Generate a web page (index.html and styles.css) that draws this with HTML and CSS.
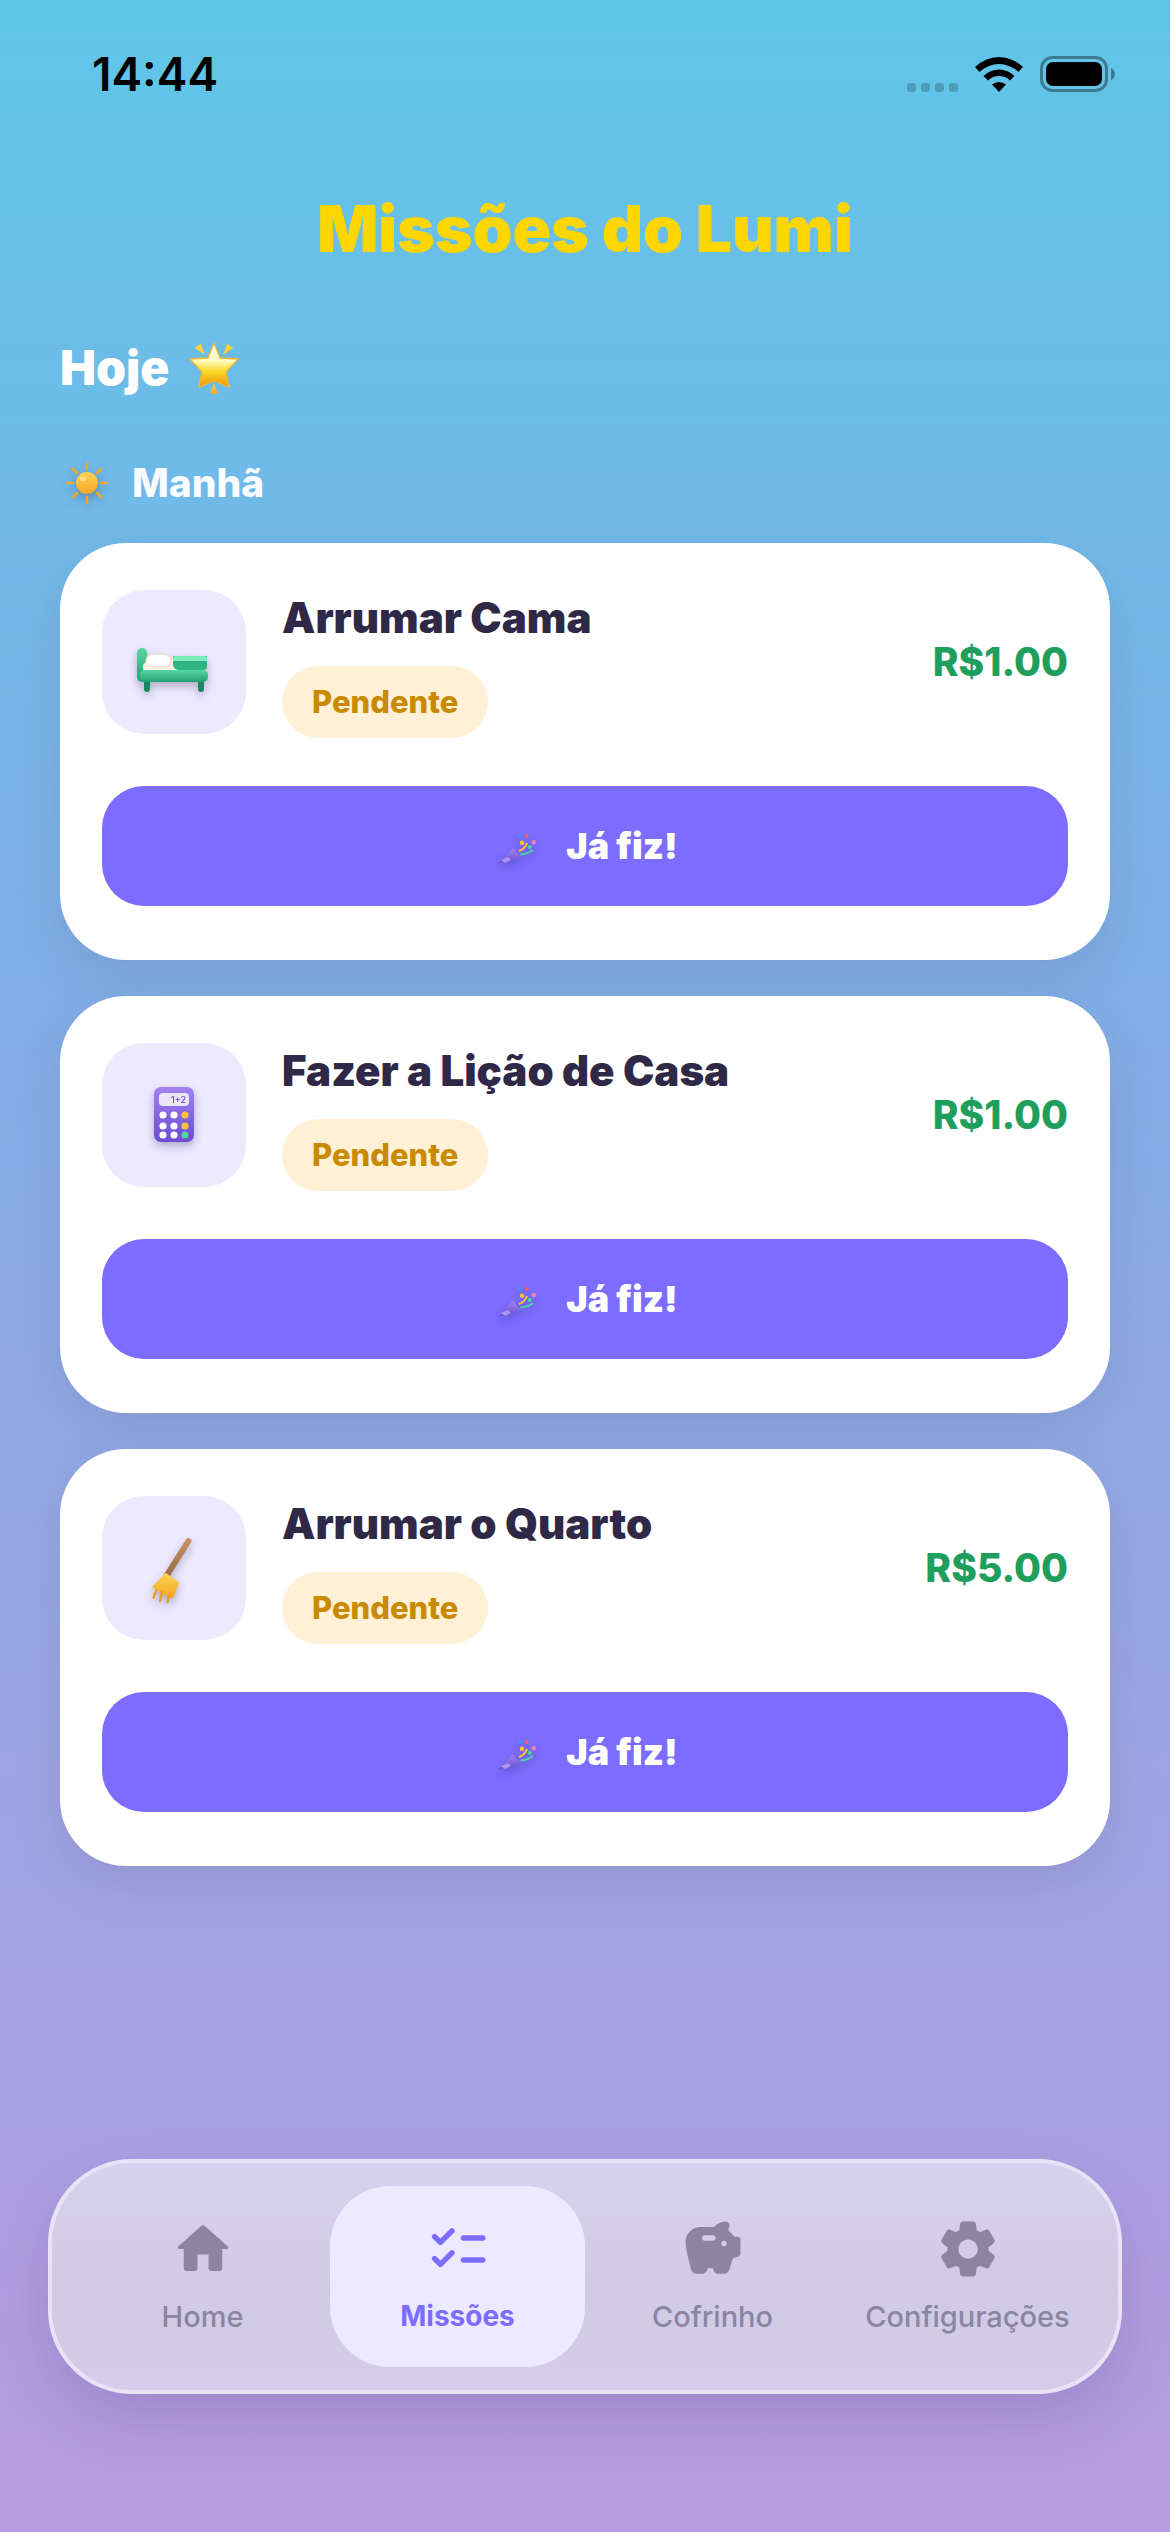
FILE: index.html
```html
<!DOCTYPE html>
<html lang="pt-BR">
<head>
<meta charset="utf-8">
<meta name="viewport" content="width=device-width, initial-scale=1">
<title>Missões do Lumi</title>
<link rel="stylesheet" href="styles.css">
</head>
<body>
<svg class="defs" aria-hidden="true">
  <defs>
    <linearGradient id="gold" x1="0" y1="0" x2="0" y2="1"><stop offset="0" stop-color="#fdd552"/><stop offset="1" stop-color="#f5a623"/></linearGradient>
    <linearGradient id="star" x1="0" y1="0" x2="0" y2="1"><stop offset="0" stop-color="#fffdf0"/><stop offset=".4" stop-color="#fffbc4"/><stop offset=".65" stop-color="#fbd826"/><stop offset="1" stop-color="#ee9410"/></linearGradient>
    <linearGradient id="green" x1="0" y1="0" x2="0" y2="1"><stop offset="0" stop-color="#56d8a4"/><stop offset="1" stop-color="#23a072"/></linearGradient>
    <linearGradient id="purple" x1="0" y1="0" x2="0" y2="1"><stop offset="0" stop-color="#a283f0"/><stop offset="1" stop-color="#6a4bd4"/></linearGradient>
    <linearGradient id="wood" gradientUnits="userSpaceOnUse" x1="0" y1="42" x2="0" y2="80"><stop offset="0" stop-color="#c99464"/><stop offset="1" stop-color="#9c6a42"/></linearGradient>
    <symbol id="popper" viewBox="0 0 48 48">
      <path d="M21 26 29 35 6 42Z" fill="url(#purple)"/>
      <path d="M9 38 16 35 19 38 13 41Z" fill="#c9b6fa" opacity=".65"/>
      <path d="M27 29Q33 27 35 21" fill="none" stroke="#fbbf3a" stroke-width="2"/>
      <path d="M28.500 32.500Q36 32 41 28" fill="none" stroke="#4cd6a0" stroke-width="2"/>
      <circle cx="28" cy="14" r="2" fill="#3b97f5"/><circle cx="34.700" cy="14" r="2" fill="#f25c66"/>
      <circle cx="41.700" cy="20.300" r="2.200" fill="#f283b8"/><circle cx="30" cy="20.700" r="2.200" fill="#fbbf3a"/>
      <circle cx="37.700" cy="25" r="2" fill="#4cd6a0"/>
    </symbol>
  </defs>
</svg>

<header class="status">
  <time class="clock">14:44</time>
  <div class="indicators">
    <svg width="51" height="9" viewBox="0 0 51 9" fill="#4d9cba" aria-hidden="true"><rect width="9" height="9" rx="3"/><rect x="14" width="9" height="9" rx="3"/><rect x="28" width="9" height="9" rx="3"/><rect x="42" width="9" height="9" rx="3"/></svg>
    <svg width="48" height="36" viewBox="0 0 48 36" aria-hidden="true"><path d="M0 11A34 34 0 0 1 48 11L43.500 16A28 28 0 0 0 4.500 16ZM8.500 20A22 22 0 0 1 39.500 20L35 24.500A16 16 0 0 0 13 24.500ZM17 28.500A11 11 0 0 1 31 28.500L24 36Z"/></svg>
    <svg width="75" height="36" viewBox="0 0 75 36" aria-hidden="true"><rect x="1.500" y="1.500" width="65" height="33" rx="11" fill="none" stroke="#3d7a90" stroke-width="3"/><rect x="6" y="6" width="56" height="24" rx="7"/><path d="M71 12Q75 14 75 18T71 24Z" fill="#3d7a90"/></svg>
  </div>
</header>

<main class="page">
  <h1 class="title">Missões do Lumi</h1>
  <h2 class="day">Hoje
    <svg width="54" height="54" viewBox="0 0 54 54" role="img" aria-label="Estrela"><g fill="url(#star)" stroke="#f5b62c" stroke-width="1.300" stroke-linejoin="round"><path d="M27 2 33 17 51 18 39 31 42 46 27 40 12 46 15 31 3 18 21 17Z"/></g><g fill="#fbd03c"><path d="M7.700 6.700 14 2.700 17.700 13.700ZM46.300 6.700 40 2.700 36.300 13.700Z"/><path d="M27 41.700 31 52.700H23Z" fill="url(#gold)"/></g></svg>
  </h2>
  <h3 class="period">
    <svg class="lifted" width="54" height="54" viewBox="0 0 54 54" aria-hidden="true"><path d="M27 7V13M27 41V47M7 27H13M41 27H47M13 13 17 17M37 37 41 41M41 13 37 17M17 37 13 41" stroke="#f5a623" stroke-width="2.500" stroke-linecap="round"/><circle cx="27" cy="27" r="11" fill="url(#gold)"/><ellipse cx="23" cy="23" rx="3.500" ry="2.200" fill="#fff" opacity=".4"/></svg>
    Manhã
  </h3>

  <section class="missions" aria-label="Missões da manhã">
    <article class="card">
      <div class="summary">
        <div class="tile"><svg class="lifted" viewBox="0 0 144 144" aria-hidden="true"><rect x="35" y="58" width="10" height="34" rx="5" fill="url(#green)"/><path d="M42 90H48V99Q48 102 45 102T42 99ZM96 90H102V99Q102 102 99 102T96 99Z" fill="#178a62"/><path d="M46 69H76V81H43Q40 80 41 75Z" fill="#fdf3e2"/><rect x="44" y="64.500" width="25" height="12.500" rx="6" fill="#fff" stroke="#ecdcc8"/><path d="M71 66H105V76Q105 80 101 80H76Q71 79 71 74Z" fill="#2fb483"/><path d="M73 66H103Q105 66 105 68V71H71V68Q71 66 73 66Z" fill="#7cecba"/><rect x="38" y="80" width="68" height="12" rx="5" fill="url(#green)"/></svg></div>
        <div class="info"><h4 class="name">Arrumar Cama</h4><span class="badge">Pendente</span></div>
        <strong class="price">R$1.00</strong>
      </div>
      <button class="done" type="button"><svg class="lifted" width="48" height="48" aria-hidden="true"><use href="#popper"/></svg>Já fiz!</button>
    </article>

    <article class="card">
      <div class="summary">
        <div class="tile"><svg class="lifted" viewBox="0 0 144 144" aria-hidden="true"><rect x="52" y="44" width="40" height="55" rx="7" fill="url(#purple)"/><rect x="57" y="50" width="30" height="13" rx="4" fill="#ece6fc"/><text x="84" y="60" text-anchor="end" class="calc">1+2</text><g fill="#fff"><circle cx="61" cy="72" r="3.600"/><circle cx="72" cy="72" r="3.600"/><circle cx="61" cy="83" r="3.600"/><circle cx="72" cy="83" r="3.600"/><circle cx="61" cy="92" r="3.600"/><circle cx="72" cy="92" r="3.600"/></g><circle cx="83" cy="72" r="3.600" fill="#fcc03c"/><circle cx="83" cy="83" r="3.600" fill="#fcc03c"/><circle cx="83" cy="92" r="3.600" fill="#52d49c"/></svg></div>
        <div class="info"><h4 class="name">Fazer a Lição de Casa</h4><span class="badge">Pendente</span></div>
        <strong class="price">R$1.00</strong>
      </div>
      <button class="done" type="button"><svg class="lifted" width="48" height="48" aria-hidden="true"><use href="#popper"/></svg>Já fiz!</button>
    </article>

    <article class="card">
      <div class="summary">
        <div class="tile"><svg class="lifted" viewBox="0 0 144 144" aria-hidden="true"><path d="M86.500 45 65 79" stroke="url(#wood)" stroke-width="6" stroke-linecap="round"/><path d="M63.700 76.700 77.300 86.700 72 100Q70 104 66 101L50 91Z" fill="url(#gold)"/><path d="M54.500 94 51.500 101.500M60 96 58 105M67 99 65.500 106" stroke="#eba01e" stroke-width="2.500" stroke-linecap="round"/></svg></div>
        <div class="info"><h4 class="name">Arrumar o Quarto</h4><span class="badge">Pendente</span></div>
        <strong class="price">R$5.00</strong>
      </div>
      <button class="done" type="button"><svg class="lifted" width="48" height="48" aria-hidden="true"><use href="#popper"/></svg>Já fiz!</button>
    </article>
  </section>
</main>

<nav class="tabs" aria-label="Principal">
  <a class="tab" href="#home"><svg viewBox="0 0 24 24" aria-hidden="true"><path d="M10 19v-5h4v5c0 .55.45 1 1 1h3c.55 0 1-.45 1-1v-7h1.700c.46 0 .68-.57.33-.87L12.670 3.600c-.38-.34-.96-.34-1.340 0l-8.360 7.530c-.34.3-.13.87.33.87H5v7c0 .55.45 1 1 1h3c.55 0 1-.45 1-1z"/></svg>Home</a>
  <a class="tab active" href="#missoes" aria-current="page"><svg viewBox="0 0 24 24" aria-hidden="true"><path d="M3.500 7.500 5.600 9.600 9.800 5.400M3.500 15.500 5.600 17.600 9.800 13.400M14 8H21M14 16H21" fill="none" stroke="currentColor" stroke-width="2" stroke-linecap="round" stroke-linejoin="round"/></svg>Missões</a>
  <a class="tab" href="#cofrinho"><svg viewBox="0 0 24 24" aria-hidden="true"><path d="M19.830 7.500l-2.270-2.270c.07-.42.18-.81.32-1.150.11-.26.15-.56.09-.87-.13-.72-.83-1.220-1.570-1.210-1.590.03-3 .81-3.900 2h-5C4.460 4 2 6.460 2 9.500c0 2.250 1.370 7.480 2.080 10.040.24.86 1.030 1.460 1.930 1.460H8c1.100 0 2-.9 2-2h2c0 1.100.9 2 2 2h2.010c.88 0 1.660-.58 1.920-1.430l1.250-4.160 2.140-.72c.41-.14.68-.52.68-.95V8.500c0-.55-.45-1-1-1h-1.170zM12 9H9c-.55 0-1-.45-1-1s.45-1 1-1h3c.55 0 1 .45 1 1s-.45 1-1 1zm4 2c-.55 0-1-.45-1-1s.45-1 1-1 1 .45 1 1-.45 1-1 1z"/></svg>Cofrinho</a>
  <a class="tab" href="#configuracoes"><svg viewBox="0 0 24 24" aria-hidden="true"><path d="M19.500 12c0-.23-.01-.45-.03-.68l1.860-1.410c.4-.3.51-.86.26-1.300l-1.870-3.230c-.25-.44-.79-.62-1.250-.42l-2.150.91c-.37-.26-.76-.49-1.170-.68l-.29-2.310C14.800 2.380 14.370 2 13.870 2h-3.730c-.51 0-.94.38-1 .88l-.29 2.310c-.41.19-.8.42-1.170.68l-2.150-.91c-.46-.2-1-.02-1.250.42L2.410 8.620c-.25.44-.14.99.26 1.300l1.860 1.410c-.02.22-.03.44-.03.67s.01.45.03.68l-1.860 1.410c-.4.3-.51.86-.26 1.300l1.870 3.230c.25.44.79.62 1.250.42l2.150-.91c.37.26.76.49 1.170.68l.29 2.310c.06.5.49.88.99.88h3.730c.5 0 .93-.38.99-.88l.29-2.310c.41-.19.8-.42 1.170-.68l2.150.91c.46.2 1 .02 1.250-.42l1.870-3.230c.25-.44.14-.99-.26-1.300l-1.860-1.410c.03-.23.04-.45.04-.68zm-7.460 3.500c-1.930 0-3.500-1.570-3.500-3.500s1.570-3.500 3.500-3.500 3.500 1.570 3.500 3.500-1.570 3.500-3.500 3.500z"/></svg>Configurações</a>
</nav>
</body>
</html>
```
FILE: styles.css
```css
* { box-sizing: border-box; }

body {
  margin: 0;
  min-height: 100vh;
  display: flex;
  flex-direction: column;
  font-family: "Inter", "Liberation Sans", sans-serif;
  background: linear-gradient(#5fc6e9, #82ade7 40%, #b89ce0);
}

h1, h2, h3, h4 { margin: 0; }
svg { flex: none; }
.defs { position: absolute; width: 0; height: 0; }
.lifted { filter: drop-shadow(0 4px 4px rgba(40, 30, 80, .3)); }

.status {
  display: flex;
  justify-content: space-between;
  align-items: center;
  height: 147px;
  padding: 0 55px 0 92px;
}
.clock { font-size: 46px; line-height: 56px; font-weight: 600; }
.indicators { display: flex; align-items: flex-end; gap: 17px; }

.page { padding: 40px 60px; }
.title {
  font-size: 64px;
  line-height: 84px;
  font-weight: 900;
  text-align: center;
  color: #ffd600;
}
.day {
  display: flex;
  align-items: center;
  gap: 18px;
  margin-top: 67px;
  font-size: 48px;
  line-height: 60px;
  font-weight: 900;
  color: #fff;
}
.period {
  display: flex;
  align-items: center;
  gap: 18px;
  margin-top: 55px;
  font-size: 39px;
  line-height: 60px;
  font-weight: 800;
  color: #f8fbff;
}

.missions { display: grid; gap: 36px; margin-top: 30px; }
.card {
  padding: 42px 42px 54px;
  border-radius: 66px;
  background: #fff;
  box-shadow: 0 18px 48px rgba(60, 60, 90, .13);
}
.summary { display: flex; align-items: center; gap: 36px; }
.tile {
  flex: none;
  width: 144px;
  height: 144px;
  border-radius: 42px;
  background: #ede9ff;
}
.tile svg { display: block; }
.calc { font-size: 9px; font-weight: 500; fill: #6a4bd4; }
.info { flex: 1; display: flex; flex-direction: column; align-items: flex-start; gap: 15px; }
.name { font-size: 42px; line-height: 66px; font-weight: 900; color: #2f2947; }
.badge {
  padding: 0 30px;
  border-radius: 36px;
  background: #fff0d6;
  color: #c98a00;
  font-size: 31px;
  line-height: 72px;
  font-weight: 800;
}
.price { font-size: 39px; line-height: 54px; font-weight: 800; color: #209e5c; }
.done {
  display: flex;
  align-items: center;
  justify-content: center;
  gap: 26px;
  width: 100%;
  height: 120px;
  margin-top: 48px;
  border: 0;
  border-radius: 42px;
  background: #7c6cff;
  color: #fff;
  font: 900 36px/48px "Inter", "Liberation Sans", sans-serif;
}

.tabs {
  display: grid;
  grid-template-columns: repeat(4, minmax(0, 1fr));
  margin: auto 48px 138px;
  padding: 23px;
  border: 4px solid #e8e4f5;
  border-radius: 84px;
  background: linear-gradient(#d7d2ef, #d1cae5 55%, #d2cbe6 75%, #d6cdea);
  box-shadow: 0 24px 60px rgba(80, 50, 120, .2);
}
.tab {
  display: flex;
  flex-direction: column;
  align-items: center;
  gap: 16px;
  padding: 30px 0 32px;
  border-radius: 60px;
  color: #8b85a3;
  font-size: 29px;
  line-height: 37px;
  font-weight: 500;
  text-decoration: none;
}
.tab svg { width: 66px; height: 66px; fill: currentColor; }
.tab.active { background: #ede9ff; color: #7c6cff; font-size: 28px; font-weight: 700; }
```
